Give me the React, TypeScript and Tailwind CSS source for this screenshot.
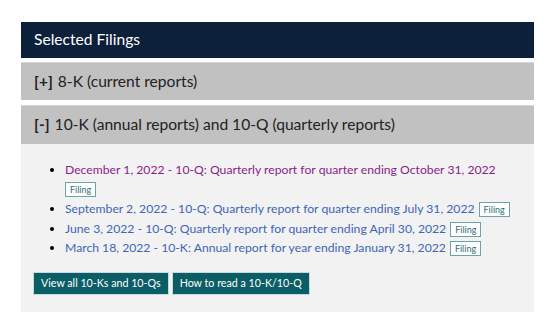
import React from 'react';

interface Filing {
  label: string;
  visited?: boolean;
}

const filings: Filing[] = [
  { label: 'December 1, 2022 - 10-Q: Quarterly report for quarter ending October 31, 2022', visited: true },
  { label: 'September 2, 2022 - 10-Q: Quarterly report for quarter ending July 31, 2022' },
  { label: 'June 3, 2022 - 10-Q: Quarterly report for quarter ending April 30, 2022' },
  { label: 'March 18, 2022 - 10-K: Annual report for year ending January 31, 2022' },
];

const FilingBadge = ({ className = '' }: { className?: string }) => (
  <span
    className={`inline-flex items-center h-[15px] px-[4px] border border-[#6aa3a8] bg-white text-[9px] leading-none text-[#2f6f77] align-middle ${className}`}
  >
    Filing
  </span>
);

export default function App() {
  return (
    <div className="w-[552px] h-[329px] bg-white pt-[22px] pl-[21px] font-['Lato','Noto_Sans',sans-serif]">
      <div className="w-[513px]">
        <div className="h-[36px] flex items-center px-[13px] bg-[#0c2039] text-white text-[15.6px]">
          Selected Filings
        </div>

        <div className="mt-[4px] h-[38px] flex items-center px-[13px] bg-[#c1c1c1] border-t border-[#d6d6d6] text-[15.6px] text-[#222]">
          <span className="font-bold mr-[5px]">[+]</span>8-K (current reports)
        </div>

        <div className="mt-[5px] h-[39px] flex items-center px-[13px] bg-[#c1c1c1] border-t border-[#d6d6d6] text-[15.6px] text-[#222]">
          <span className="font-bold mr-[5px]">[-]</span>10-K (annual reports) and 10-Q (quarterly reports)
        </div>

        <div className="bg-[#f2f2f2] pt-[16px] pb-[17px] px-[12px]">
          <ul className="list-disc pl-[32px] text-[12.2px] leading-[19.5px] marker:text-black">
            {filings.map((f) =>
              f.visited ? (
                <li key={f.label}>
                  <span className="text-[#8a1d8b]">{f.label}</span>
                  <div className="h-[19.5px] flex items-center">
                    <FilingBadge />
                  </div>
                </li>
              ) : (
                <li key={f.label}>
                  <span className="text-[#3d66b5]">{f.label}</span>
                  <FilingBadge className="ml-[4px]" />
                </li>
              )
            )}
          </ul>

          <div className="mt-[14px] flex gap-[3px]">
            <button className="h-[23px] px-[7px] bg-[#0b5d66] border border-[#c9d8da] text-white text-[10.7px]">
              View all 10-Ks and 10-Qs
            </button>
            <button className="h-[23px] px-[7px] bg-[#0b5d66] border border-[#c9d8da] text-white text-[10.7px]">
              How to read a 10-K/10-Q
            </button>
          </div>
        </div>
      </div>
    </div>
  );
}
